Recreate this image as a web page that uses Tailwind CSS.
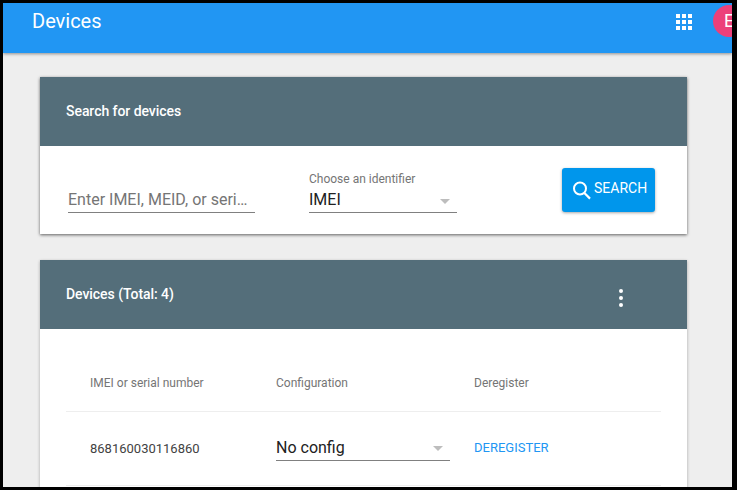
<!DOCTYPE html>
<html><head><meta charset="utf-8"><title>Devices</title>
<script src="https://cdn.jsdelivr.net/npm/@tailwindcss/browser@4"></script></head>
<body class="m-0 w-[737px] h-[490px] overflow-hidden bg-black font-['Roboto',sans-serif]">
<div class="ml-[3px] mt-[3px] w-[729px] h-[484px] overflow-hidden bg-[#eeeeee] flex flex-col">
  <header class="h-[50px] shrink-0 bg-[#2196f3] shadow-[0_1px_3px_rgba(0,0,0,0.4)] flex items-start relative z-10 overflow-hidden">
    <div class="ml-[29px] mt-[4px] text-[20px] leading-[28px] text-white">Devices</div>
    <svg class="ml-auto mt-[10px] mr-[20px]" width="18" height="18" viewBox="0 0 18 18" fill="#fff"><path d="M1 1h4v4H1zM7 1h4v4H7zM13 1h4v4h-4zM1 7h4v4H1zM7 7h4v4H7zM13 7h4v4h-4zM1 13h4v4H1zM7 13h4v4H7zM13 13h4v4h-4z"/></svg>
    <div class="mt-[2px] mr-[-13px] w-[32px] h-[32px] shrink-0 rounded-full bg-[#ec407a] text-white text-[18px] leading-[32px] pl-[11px]">E</div>
  </header>
  <main class="pl-[37px] pt-[24px] flex flex-col gap-[26px]">
    <section class="w-[647px] h-[157px] shrink-0 bg-white shadow-[0_1px_3px_rgba(0,0,0,0.6)]">
      <div class="h-[69px] bg-[#546e7a] pl-[26px] flex items-center text-white text-[14px] font-medium tracking-[-0.05px]">Search for devices</div>
      <div class="relative h-[88px]">
        <div class="flex">
          <div class="ml-[28px] mt-[32px] w-[187px] h-[35px] border-b border-[#808080] text-[16px] leading-[43px] text-[#757575] whitespace-nowrap">Enter IMEI, MEID, or seri…</div>
          <div class="ml-[54px] mt-[26px] w-[148px]">
            <div class="text-[12px] leading-[14px] text-[#757575]">Choose an identifier</div>
            <div class="mt-[1px] h-[26px] border-b border-[#808080] flex items-center justify-between text-[16px] text-[#212121]">
              <span class="mt-[1px]">IMEI</span>
              <span class="mr-[7px] mt-[3px] w-0 h-0 border-x-[5px] border-t-[5px] border-x-transparent border-t-[#bdbdbd]"></span>
            </div>
          </div>
          <button class="ml-[105px] mt-[22px] w-[93px] h-[44px] rounded-[3px] bg-[#0096ec] shadow-[0_1px_3px_rgba(0,0,0,0.35)] flex items-center pl-[10px] gap-[2px] text-white text-[14px]">
            <svg class="shrink-0 -mt-[1px]" width="20" height="20" viewBox="0 0 20 20" fill="none" stroke="#fff" stroke-width="2"><circle cx="8" cy="8.5" r="6"/><path d="M12.4 13 18 18.6" stroke-width="2.2"/></svg>
            <span class="mb-[3px]">SEARCH</span>
          </button>
        </div>
      </div>
    </section>
    <section class="w-[647px] h-[300px] shrink-0 bg-white shadow-[0_1px_3px_rgba(0,0,0,0.3)]">
      <div class="h-[69px] bg-[#546e7a] pl-[26px] pr-[64px] flex items-center justify-between text-white text-[14px] font-medium tracking-[-0.05px]">
        <span class="-mt-[1px]">Devices (Total: 4)</span>
        <span class="mt-[7px] flex flex-col gap-[3px]"><i class="block w-[4px] h-[4px] rounded-full bg-white"></i><i class="block w-[4px] h-[4px] rounded-full bg-white"></i><i class="block w-[4px] h-[4px] rounded-full bg-white"></i></span>
      </div>
      <div class="mx-[26px]">
        <div class="h-[83px] pt-[47px] flex border-b border-[#eeeeee] text-[12px] leading-[14px] text-[#757575]">
          <span class="ml-[24px] w-[186px]">IMEI or serial number</span>
          <span class="w-[198px]">Configuration</span>
          <span>Deregister</span>
        </div>
        <div class="h-[74px] flex items-center border-b border-[#eeeeee]">
          <span class="ml-[24px] w-[186px] text-[13px] text-[#424242]">868160030116860</span>
          <div class="w-[174px] h-[27px] -mt-[2px] border-b border-[#808080] flex items-center justify-between text-[16px] text-[#212121]">
            <span class="mt-[2px]">No config</span>
            <span class="mr-[7px] mt-[3px] w-0 h-0 border-x-[5px] border-t-[5px] border-x-transparent border-t-[#bdbdbd]"></span>
          </div>
          <span class="ml-[24px] -mt-[1px] text-[13px] text-[#2196f3]">DEREGISTER</span>
        </div>
      </div>
    </section>
  </main>
</div>
</body></html>
